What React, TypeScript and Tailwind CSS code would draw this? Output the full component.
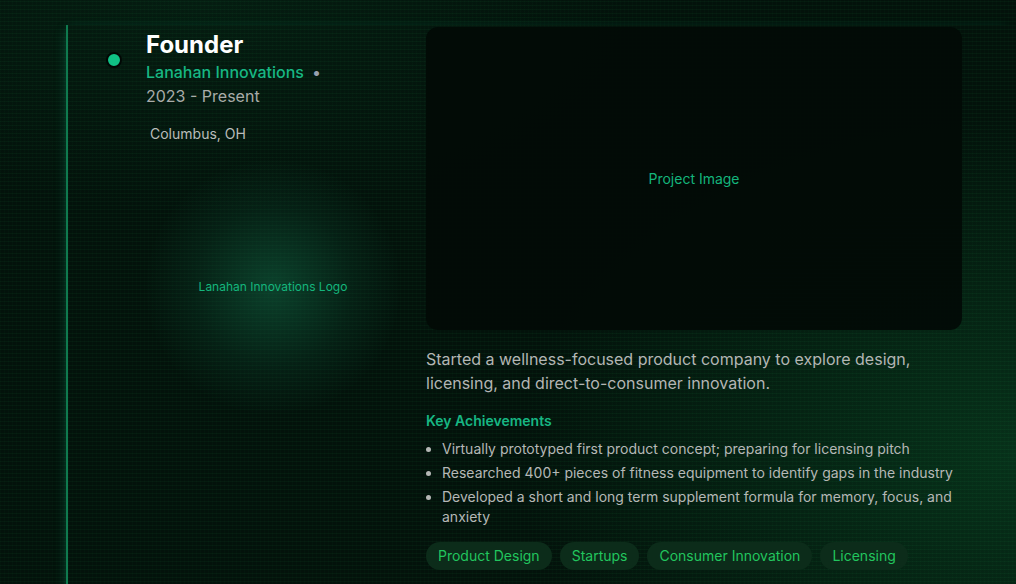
import React from 'react';

const achievements = [
  'Virtually prototyped first product concept; preparing for licensing pitch',
  'Researched 400+ pieces of fitness equipment to identify gaps in the industry',
  'Developed a short and long term supplement formula for memory, focus, and anxiety',
];

const tags = ['Product Design', 'Startups', 'Consumer Innovation', 'Licensing'];

const App: React.FC = () => {
  return (
    <div className="relative min-h-screen w-full overflow-hidden bg-[#03120b] font-['Inter',sans-serif]">
      {/* ambient glow + scanlines */}
      <div className="pointer-events-none absolute inset-0 bg-[radial-gradient(ellipse_70%_80%_at_100%_75%,rgba(16,120,60,0.3),transparent_70%)]" />
      <div className="pointer-events-none absolute inset-0 bg-[radial-gradient(ellipse_60%_50%_at_20%_0%,rgba(10,60,35,0.25),transparent_70%)]" />
      <div className="pointer-events-none absolute inset-0 bg-[repeating-linear-gradient(0deg,rgba(34,197,94,0.05)_0px,rgba(34,197,94,0.05)_1px,transparent_1px,transparent_4px)]" />
      <div className="pointer-events-none absolute inset-0 bg-[repeating-linear-gradient(90deg,rgba(34,197,94,0.025)_0px,rgba(34,197,94,0.025)_1px,transparent_1px,transparent_4px)]" />

      <div className="relative pl-[66px] pt-[25px]">
        <div className="relative border-l-2 border-[#0f7a4f] pl-[78px] pt-[2px] pb-10 shadow-[-4px_0_12px_-6px_rgba(16,185,129,0.4)]">
          <span className="absolute left-[38px] top-[27px] h-4 w-4 rounded-full border-[2.5px] border-[#020805] bg-[#10c185]" />

          <div className="flex gap-[26px]">
            <div className="w-[254px] shrink-0 pt-[3px]">
              <h3 className="text-2xl font-bold leading-[30px] text-white">Founder</h3>
              <div className="flex flex-wrap items-center gap-x-2 text-base leading-6">
                <span className="font-medium text-[#17b783]">Lanahan Innovations</span>
                <span className="text-gray-400">•</span>
                <span className="text-[#a9aca9]">2023 - Present</span>
              </div>
              <p className="mt-4 pl-1 text-sm leading-5 text-[#b9bcba]">Columbus, OH</p>
              <div className="mt-4 flex h-[254px] w-[254px] items-center justify-center rounded-full bg-[radial-gradient(circle_at_center,rgba(20,110,75,0.5)_0%,rgba(15,80,55,0.22)_45%,transparent_72%)]">
                <span className="text-xs text-[#14b57c]">Lanahan Innovations Logo</span>
              </div>
            </div>

            <div className="w-[536px] shrink-0">
              <div className="flex h-[303px] items-center justify-center rounded-xl bg-[#020b06]/95">
                <span className="text-sm text-[#14b57c]">Project Image</span>
              </div>
              <p className="mt-[17px] text-base leading-6 text-[#b3b6b4]">
                Started a wellness-focused product company to explore design, licensing, and direct-to-consumer innovation.
              </p>
              <h4 className="mt-4 text-sm font-semibold leading-5 text-[#17b783]">Key Achievements</h4>
              <ul className="mt-2 list-disc space-y-1 pl-4 text-sm leading-5 text-[#b5b8b6] marker:text-[#b5b8b6]">
                {achievements.map((a) => (
                  <li key={a}>{a}</li>
                ))}
              </ul>
              <div className="mt-[15px] flex flex-wrap gap-2">
                {tags.map((t) => (
                  <span key={t} className="rounded-full bg-[#0c2c1a] px-3 py-1 text-sm leading-5 text-[#22c55e]">
                    {t}
                  </span>
                ))}
              </div>
            </div>
          </div>
        </div>
      </div>
    </div>
  );
};

export default App;
